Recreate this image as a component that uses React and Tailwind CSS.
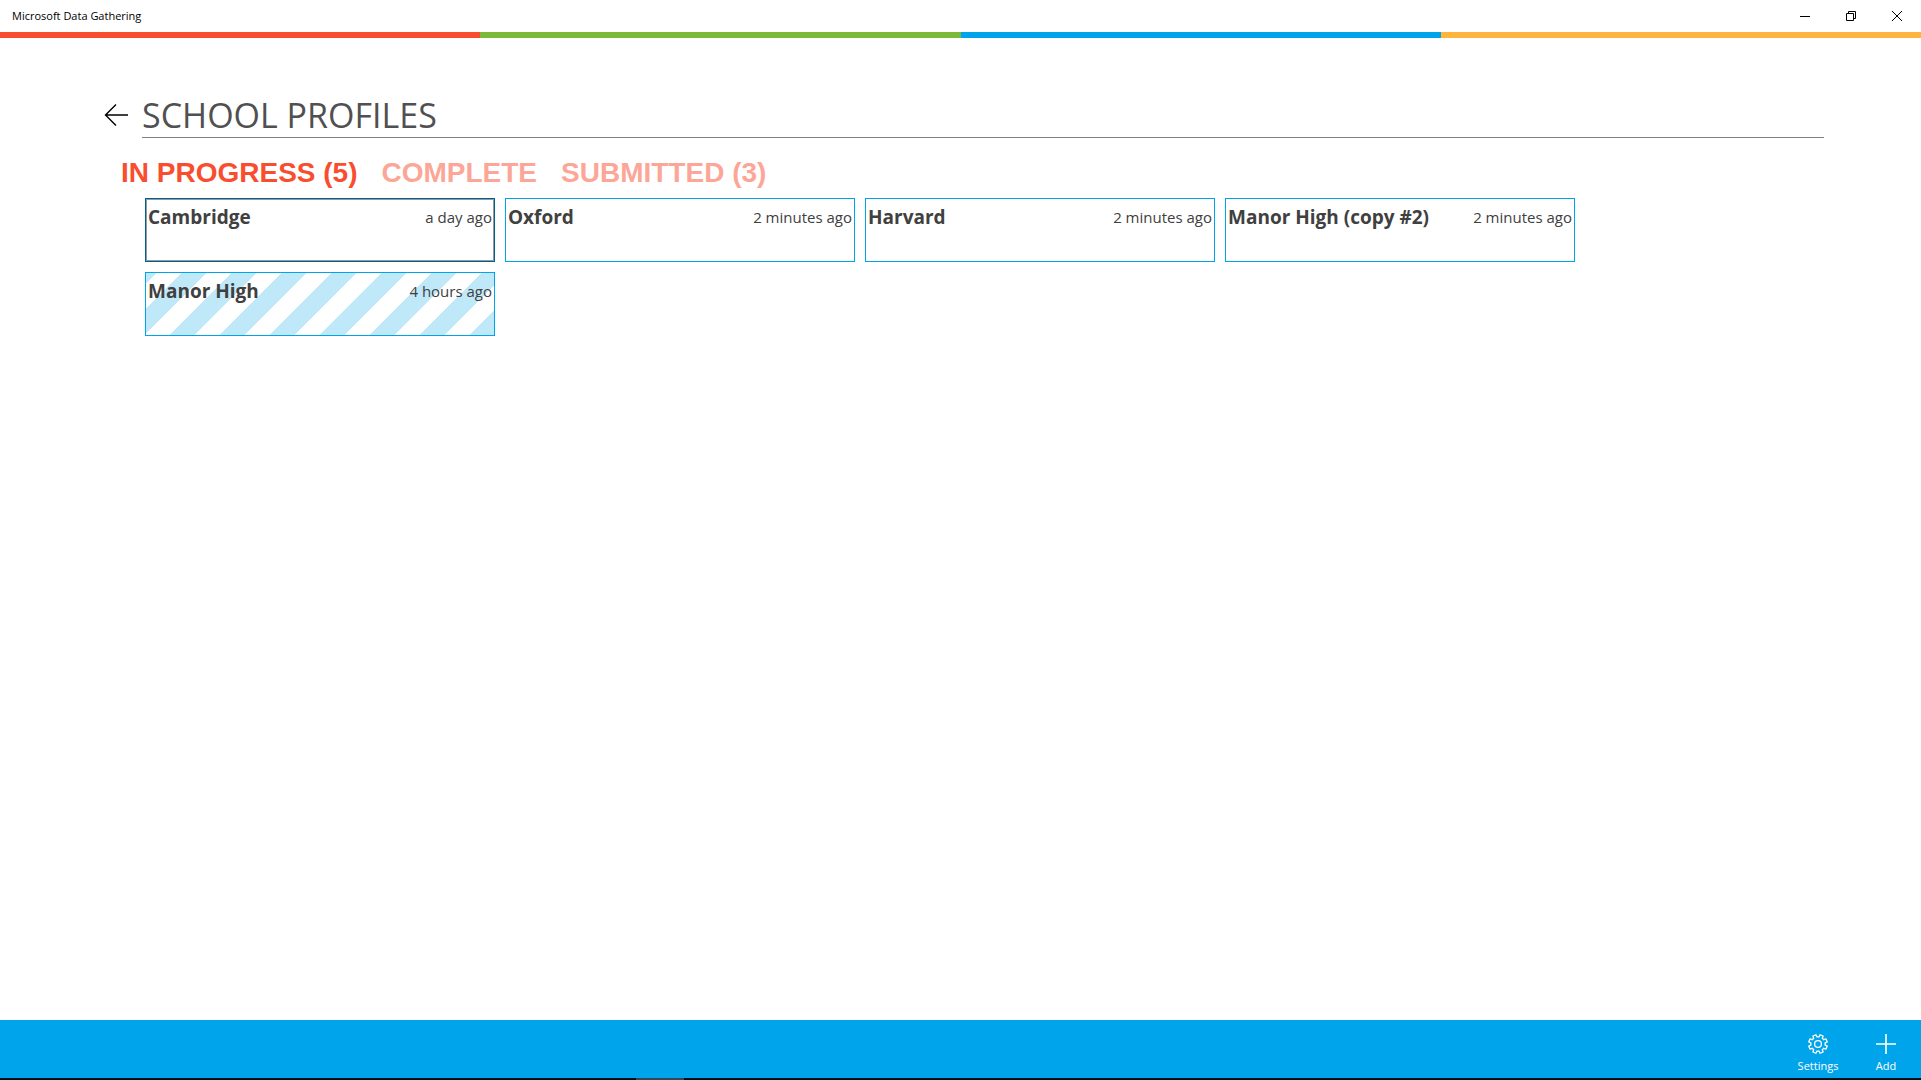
import { useState } from "react";
import clsx from "clsx";

const STRIPES = ["bg-[#f84e2f]", "bg-[#7cb93a]", "bg-[#00a4ea]", "bg-[#ffb53d]"];

const TABS = [
  { id: "progress", label: "IN PROGRESS (5)" },
  { id: "complete", label: "COMPLETE" },
  { id: "submitted", label: "SUBMITTED (3)" },
];

const PROFILES = [
  { name: "Cambridge", time: "a day ago", focused: true },
  { name: "Oxford", time: "2 minutes ago" },
  { name: "Harvard", time: "2 minutes ago" },
  { name: "Manor High (copy #2)", time: "2 minutes ago" },
  { name: "Manor High", time: "4 hours ago", striped: true },
];

// eight teeth, with a notch at twelve o'clock
const gearPoints = Array.from({ length: 8 }, (_, i) => {
  const mid = i * 45 + 22.5;
  return [[-14, 7.2], [-10, 9.5], [10, 9.5], [14, 7.2]].map(([d, r]) => {
    const a = ((mid + d) * Math.PI) / 180;
    return `${(10 + r * Math.sin(a)).toFixed(2)},${(10 - r * Math.cos(a)).toFixed(2)}`;
  }).join(" ");
}).join(" ");

function GearIcon() {
  return (
    <svg className="size-5" viewBox="0 0 20 20" fill="none" stroke="currentColor" strokeWidth="1.3" strokeLinejoin="round" aria-hidden="true">
      <polygon points={gearPoints} />
      <circle cx="10" cy="10" r="3.4" />
    </svg>
  );
}

function PlusIcon() {
  return (
    <svg className="size-5" viewBox="0 0 20 20" stroke="currentColor" strokeWidth="1.6" aria-hidden="true">
      <path d="M10 0v20M0 10h20" />
    </svg>
  );
}

function TitleBar() {
  return (
    <header className="flex h-8 items-center justify-between pr-px pl-3 text-[11px] text-black">
      <span>Microsoft Data Gathering</span>
      <div className="flex h-full">
        <button aria-label="Minimize" className="flex w-[46px] items-center justify-center">
          <svg className="size-[10px]" viewBox="0 0 10 10" stroke="currentColor" aria-hidden="true"><path d="M0 5.5h10" /></svg>
        </button>
        <button aria-label="Restore" className="flex w-[46px] items-center justify-center">
          <svg className="size-[10px]" viewBox="0 0 10 10" fill="none" stroke="currentColor" aria-hidden="true">
            <path d="M.5 2.5h7v7h-7zM2.5 2.5v-2h7v7h-2" />
          </svg>
        </button>
        <button aria-label="Close" className="flex w-[46px] items-center justify-center">
          <svg className="size-[10px]" viewBox="0 0 10 10" stroke="currentColor" aria-hidden="true"><path d="M0 0l10 10M10 0L0 10" /></svg>
        </button>
      </div>
    </header>
  );
}

function ProfileCard({ name, time, focused, striped }) {
  return (
    <button
      className={clsx(
        "flex h-16 w-[350px] items-start justify-between border px-[2px] pt-1 text-[#404040] outline-none",
        focused ? "border-[#00628c] inset-ring inset-ring-[#999999]" : "border-[#00a4ea]",
        striped && "bg-[linear-gradient(135deg,#bfe8f9_25%,#ffffff_25%,#ffffff_50%,#bfe8f9_50%,#bfe8f9_75%,#ffffff_75%)] bg-[length:50px_50px] bg-[position:-14px_0px]"
      )}
    >
      <span className="text-[19px] leading-7 font-bold">{name}</span>
      <span className="text-[15px] leading-7">{time}</span>
    </button>
  );
}

export default function App() {
  const [tab, setTab] = useState("progress");

  return (
    <div className="flex min-h-screen flex-col bg-white font-['Open_Sans',sans-serif]">
      <TitleBar />
      <div className="flex h-[6px]">
        {STRIPES.map((c) => <div key={c} className={clsx("flex-1", c)} />)}
      </div>

      <main className="flex-1 pt-[50px] pr-[97px] pl-[104px]">
        <div className="flex items-stretch">
          <button aria-label="Back" className="flex w-[38px] items-center pt-1 text-black">
            <svg className="h-[22px] w-6" viewBox="0 0 24 22" fill="none" stroke="currentColor" strokeWidth="1.4" aria-hidden="true">
              <path d="M24 11H1.5M12 .5L1.5 11L12 21.5" />
            </svg>
          </button>
          <h1 className="flex-1 border-b border-[#808080] pt-[6px] text-[34px] leading-[43px] text-[#505050]">SCHOOL PROFILES</h1>
        </div>

        <div role="tablist" className="flex gap-6 pt-[19px] pl-[17px] font-['Liberation_Sans',Arial,sans-serif]">
          {TABS.map((t) => (
            <button
              key={t.id}
              role="tab"
              aria-selected={tab === t.id}
              onClick={() => setTab(t.id)}
              className={clsx("text-[28px] leading-8 font-bold", tab === t.id ? "text-[#f84e2f]" : "text-[#fca697]")}
            >
              {t.label}
            </button>
          ))}
        </div>

        <div className="flex flex-wrap gap-[10px] pt-[9px] pl-[41px]">
          {PROFILES.map((p) => <ProfileCard key={p.name} {...p} />)}
        </div>
      </main>

      <footer className="flex h-[58px] justify-end bg-[#00a4ea] pr-px text-[11px] leading-4 text-white">
        <button className="flex w-[68px] flex-col items-center gap-1 pt-[14px]">
          <GearIcon />
          Settings
        </button>
        <button className="flex w-[68px] flex-col items-center gap-1 pt-[14px]">
          <PlusIcon />
          Add
        </button>
      </footer>
      <div className="flex h-[2px] bg-[#00101a]">
        <div className="ml-[33.1%] w-12 bg-[#2f4a55]" />
      </div>
    </div>
  );
}
